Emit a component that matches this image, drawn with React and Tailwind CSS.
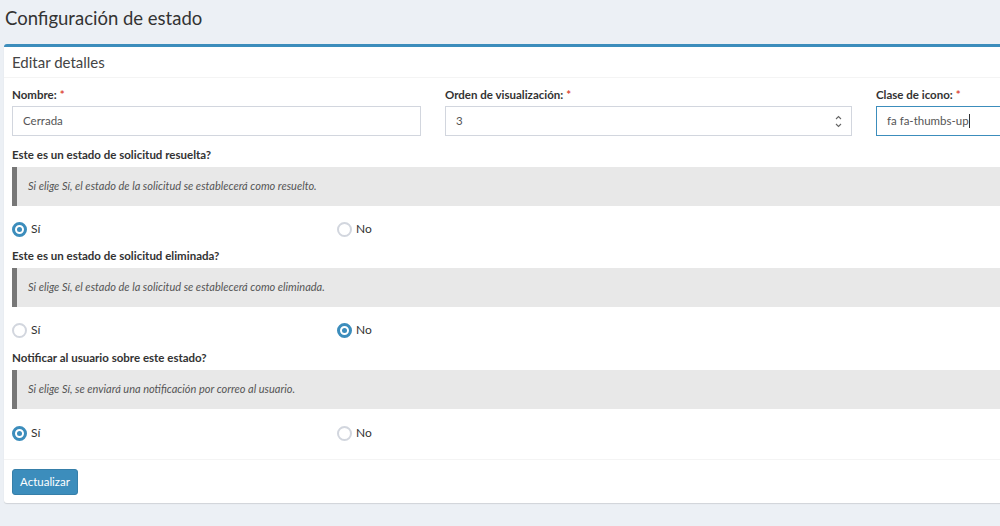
import React from "react";

const sections = [
  {
    label: "Este es un estado de solicitud resuelta?",
    help: "Si elige Sí, el estado de la solicitud se establecerá como resuelto.",
    value: "si",
    top: "mt-[11px]",
    gap: "mt-[13px]",
  },
  {
    label: "Este es un estado de solicitud eliminada?",
    help: "Si elige Sí, el estado de la solicitud se establecerá como eliminada.",
    value: "no",
    top: "mt-[9px]",
    gap: "mt-[13px]",
  },
  {
    label: "Notificar al usuario sobre este estado?",
    help: "Si elige Sí, se enviará una notificación por correo al usuario.",
    value: "si",
    top: "mt-[10px]",
    gap: "mt-[14px]",
  },
];

const Radio = ({ checked, label }) => (
  <div className="flex items-center gap-[4px] h-[20px]">
    {checked ? (
      <span className="w-[15px] h-[15px] rounded-full border-[3px] border-[#3c8dbc] flex items-center justify-center bg-white">
        <span className="w-[5px] h-[5px] rounded-full bg-[#3c8dbc]"></span>
      </span>
    ) : (
      <span className="w-[15px] h-[15px] rounded-full border-[2px] border-[#d2d6de] bg-white"></span>
    )}
    <span className="text-[12px] text-[#333]">{label}</span>
  </div>
);

const Label = ({ children, req }) => (
  <div className="h-[16px] flex items-center text-[11.5px] font-bold text-[#333]">
    {children}
    {req && <span className="text-[#dd4b39] ml-[3px]">*</span>}
  </div>
);

const App = () => {
  return (
    <div
      className="w-[1000px] h-[526px] overflow-hidden bg-[#ecf0f5]"
      style={{ fontFamily: "Lato, 'Liberation Sans', sans-serif" }}
    >
      <h1 className="h-[44px] pl-[5px] pt-[6px] text-[18.5px] text-[#333] leading-[24px]">
        Configuración de estado
      </h1>
      <div className="ml-[4px] w-[1310px] bg-white border-t-[3px] border-[#3c8dbc] rounded-[3px] shadow-[0_1px_1px_rgba(0,0,0,0.12)]">
        <div className="h-[31px] px-[8px] flex items-center border-b border-[#f4f4f4] text-[15px] text-[#444]">
          Editar detalles
        </div>
        <div className="px-[8px] pt-[9px] pb-[16px]">
          <div className="grid grid-cols-[409px_407px_409px] gap-x-[24px]">
            <div>
              <div className="mb-[3px]">
                <Label req>Nombre:</Label>
              </div>
              <div className="h-[30px] border border-[#d2d6de] px-[10px] flex items-center text-[11.5px] text-[#555]">
                Cerrada
              </div>
            </div>
            <div>
              <div className="mb-[3px]">
                <Label req>Orden de visualización:</Label>
              </div>
              <div className="h-[30px] border border-[#d2d6de] px-[10px] flex items-center justify-between text-[11.5px] text-[#555]">
                <span>3</span>
                <span className="flex flex-col items-center leading-none -mr-[1px]">
                  <svg width="7" height="5" viewBox="0 0 7 5">
                    <path d="M1 4 L3.5 1.5 L6 4" fill="none" stroke="#666" strokeWidth="1.1" />
                  </svg>
                  <svg width="7" height="5" viewBox="0 0 7 5" className="mt-[3px]">
                    <path d="M1 1 L3.5 3.5 L6 1" fill="none" stroke="#666" strokeWidth="1.1" />
                  </svg>
                </span>
              </div>
            </div>
            <div>
              <div className="mb-[3px]">
                <Label req>Clase de icono:</Label>
              </div>
              <div className="h-[30px] border border-[#3c8dbc] px-[10px] flex items-center text-[11.5px] text-[#555]">
                fa fa-thumbs-up
                <span className="w-[1px] h-[14px] bg-[#333]"></span>
              </div>
            </div>
          </div>

          {sections.map((s, i) => (
            <div key={i} className={s.top}>
              <div className="mb-[4px]">
                <Label>{s.label}</Label>
              </div>
              <div className="h-[39px] bg-[#e8e8e8] border-l-[5px] border-[#777] flex items-center pl-[11px] text-[11px] italic text-[#555]">
                {s.help}
              </div>
              <div className={`${s.gap} flex w-[1300px]`}>
                <div className="w-[325px]">
                  <Radio checked={s.value === "si"} label="Sí" />
                </div>
                <div className="w-[325px]">
                  <Radio checked={s.value === "no"} label="No" />
                </div>
              </div>
            </div>
          ))}
        </div>
        <div className="border-t border-[#f4f4f4] px-[8px] pt-[8px] pb-[8px]">
          <button className="h-[26px] w-[66px] rounded-[3px] bg-[#3c8dbc] border border-[#367fa9] text-white text-[11.5px]">
            Actualizar
          </button>
        </div>
      </div>
    </div>
  );
};

export default App;
